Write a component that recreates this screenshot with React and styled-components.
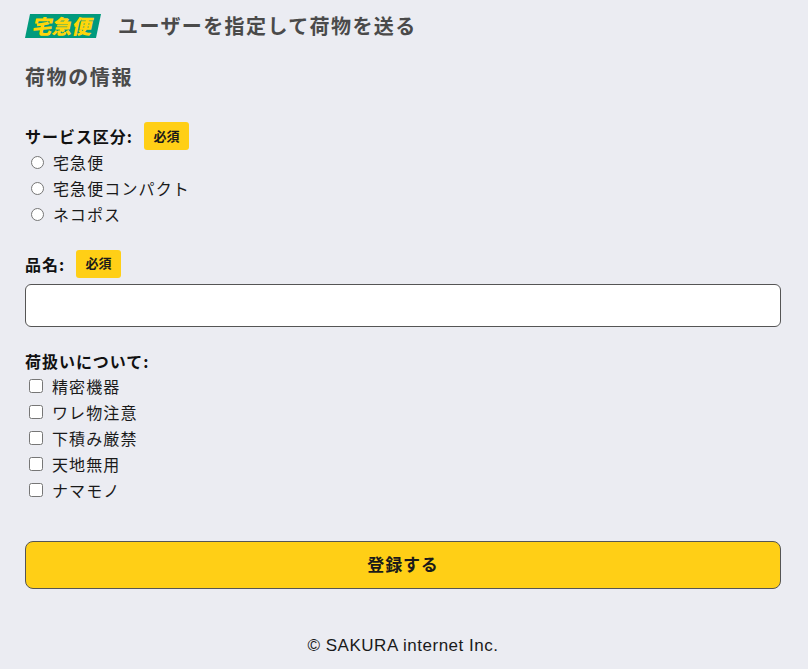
import React from "react";
import styled, { createGlobalStyle } from "styled-components";

const GlobalStyle = createGlobalStyle`
  html, body {
    margin: 0;
    padding: 0;
    background: #ebecf2;
  }
  body {
    font-family: "Noto Sans CJK JP", "Liberation Sans", sans-serif;
    color: #1a1a1a;
    letter-spacing: 0.07em;
  }
`;

const services = ["宅急便", "宅急便コンパクト", "ネコポス"];
const handling = ["精密機器", "ワレ物注意", "下積み厳禁", "天地無用", "ナマモノ"];

const App = () => {
  return (
    <Page>
      <GlobalStyle />
      <Header>
        <Logo>
          <LogoText>宅急便</LogoText>
        </Logo>
        <Title>ユーザーを指定して荷物を送る</Title>
      </Header>
      <SectionTitle>荷物の情報</SectionTitle>
      <Form>
        <Field $gap={22}>
          <LabelRow>
            <Label>サービス区分:</Label>
            <Required>必須</Required>
          </LabelRow>
          <Options $shift={-1}>
            {services.map((name) => (
              <Option key={name}>
                <Radio type="radio" name="service" />
                {name}
              </Option>
            ))}
          </Options>
        </Field>
        <Field $gap={22}>
          <LabelRow>
            <Label>品名:</Label>
            <Required>必須</Required>
          </LabelRow>
          <TextInput type="text" />
        </Field>
        <Field $gap={37}>
          <PlainLabel>荷扱いについて:</PlainLabel>
          <Options $shift={0}>
            {handling.map((name) => (
              <Option key={name}>
                <Check type="checkbox" />
                {name}
              </Option>
            ))}
          </Options>
        </Field>
        <Submit type="button">登録する</Submit>
      </Form>
      <Footer>© SAKURA internet Inc.</Footer>
    </Page>
  );
};

export default App;

const Page = styled.div`
  width: 808px;
  height: 669px;
  box-sizing: border-box;
  padding: 14px 27px 0 25px;
  overflow: hidden;
`;

const Header = styled.div`
  display: flex;
  align-items: center;
  height: 24px;
  gap: 17px;
`;

const Logo = styled.div`
  width: 76px;
  height: 24px;
  display: flex;
  align-items: center;
  justify-content: center;
  background: #009a7d;
  clip-path: polygon(5px 0, 100% 0, 71px 100%, 0 100%);
`;

const LogoText = styled.span`
  color: #ffd60a;
  font-size: 20px;
  font-weight: 900;
  line-height: 24px;
  letter-spacing: 0;
  transform: skewX(-12deg);
`;

const Title = styled.h1`
  margin: 0;
  font-size: 20px;
  line-height: 24px;
  font-weight: 700;
  letter-spacing: 0.07em;
  color: #4a4a4a;
`;

const SectionTitle = styled.h2`
  margin: 25px 0 0;
  font-size: 20px;
  line-height: 28px;
  font-weight: 700;
  letter-spacing: 0.08em;
  color: #4a4a4a;
`;

const Form = styled.form`
  margin-top: 31px;
  display: flex;
  flex-direction: column;
`;

const Field = styled.div`
  display: flex;
  flex-direction: column;
  margin-bottom: ${(props) => props.$gap}px;
`;

const LabelRow = styled.div`
  display: flex;
  align-items: center;
  gap: 11px;
  height: 28px;
`;

const Label = styled.label`
  font-size: 16px;
  line-height: 22px;
  font-weight: 700;
  letter-spacing: 0.06em;
  color: #111;
`;

const PlainLabel = styled(Label)`
  line-height: 24px;
`;

const Required = styled.span`
  box-sizing: border-box;
  width: 45px;
  height: 28px;
  padding-bottom: 2px;
  border-radius: 3px;
  display: flex;
  align-items: center;
  justify-content: center;
  background: #ffcf16;
  color: #1a1a1a;
  font-size: 13px;
  font-weight: 700;
  letter-spacing: 0;
`;

const Options = styled.div`
  display: flex;
  flex-direction: column;
  margin-top: ${(props) => props.$shift}px;
`;

const Option = styled.label`
  display: flex;
  align-items: center;
  height: 26.2px;
  font-size: 16px;
  color: #1a1a1a;
`;

const Radio = styled.input`
  appearance: none;
  box-sizing: border-box;
  width: 13px;
  height: 13px;
  margin: 0 9px 0 6px;
  border: 1px solid #767676;
  border-radius: 50%;
  background: #fff;
`;

const Check = styled.input`
  appearance: none;
  box-sizing: border-box;
  width: 14px;
  height: 14px;
  margin: 0 9px 0 4px;
  border: 1px solid #767676;
  border-radius: 2.5px;
  background: #fff;
`;

const TextInput = styled.input`
  box-sizing: border-box;
  width: 756px;
  height: 43px;
  margin-top: 6px;
  border: 1px solid #555;
  border-radius: 6px;
  background: #fff;
`;

const Submit = styled.button`
  box-sizing: border-box;
  width: 756px;
  height: 48px;
  padding: 0 0 2px;
  border: 1px solid #555;
  border-radius: 8px;
  background: #ffcf16;
  color: #1a1a1a;
  font-family: inherit;
  font-size: 17px;
  font-weight: 700;
  letter-spacing: 0.05em;
`;

const Footer = styled.footer`
  margin-top: 45px;
  text-align: center;
  font-family: "Liberation Sans", sans-serif;
  font-size: 17px;
  line-height: 24px;
  letter-spacing: 0.03em;
  color: #1a1a1a;
`;
